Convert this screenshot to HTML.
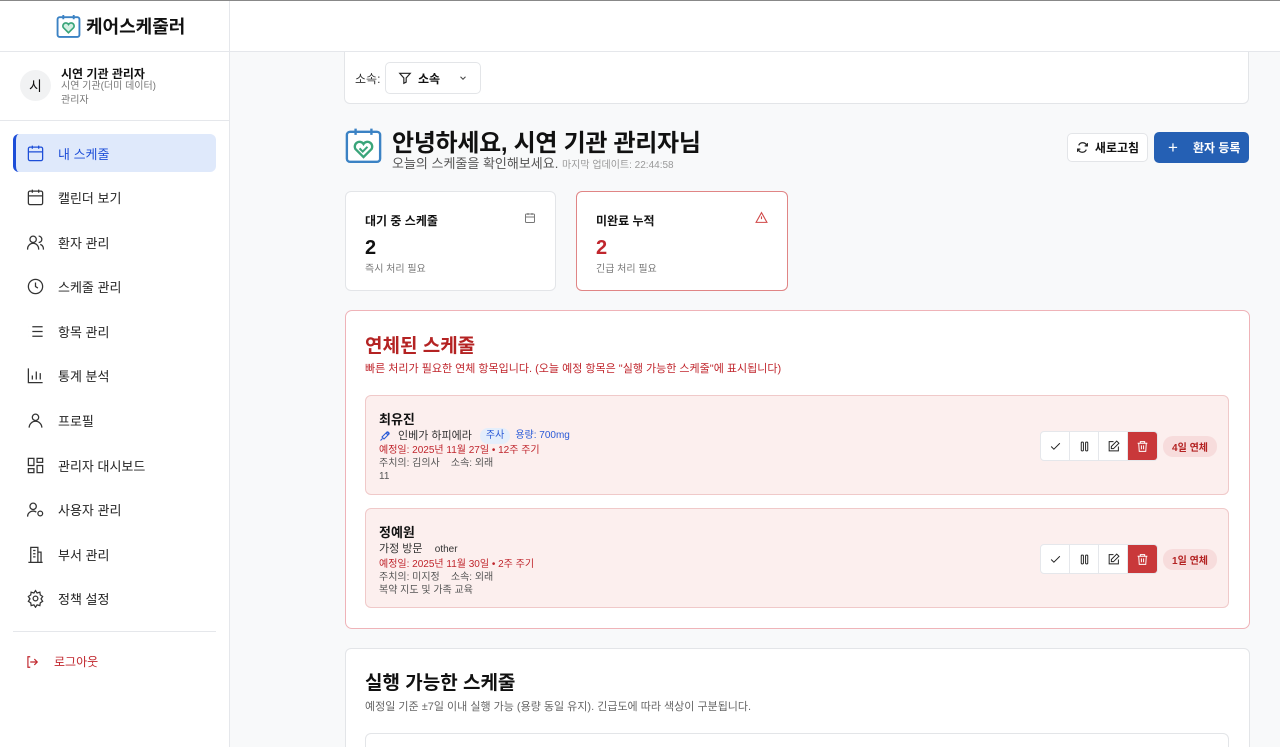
<!DOCTYPE html>
<html style="height:747px;overflow:hidden"><head><meta charset="utf-8"><style>
*{box-sizing:border-box;margin:0;padding:0}
body{width:1280px;height:747px;overflow:hidden;background:#f8f9fa;font-family:"Liberation Sans","Noto Sans CJK KR",sans-serif;color:#111;position:relative}
.abs{position:absolute}
.side{left:0;top:0;width:230px;height:747px;background:#fff;border-right:1px solid #e5e7eb}
.top{left:230px;top:0;width:1050px;height:52px;background:#fff;border-bottom:1px solid #e5e7eb}
.nav{position:absolute;left:13px;width:203px;height:38px;display:flex;align-items:center;padding-left:13px;font-size:13px;color:#222;border-radius:6px}
.nav svg{width:19px;height:19px;margin-right:13px;stroke:#333;fill:none;stroke-width:1.6}
.nav.act{background:#dfe9fb;color:#1d4ed8;border-left:3px solid #1d4ed8;padding-left:10px}
.nav.act svg{stroke:#1d4ed8}
.card{background:#fff;border:1px solid #e3e5e8;border-radius:6px}
.item{left:365px;width:864px;background:#fcefee;border:1px solid #f0c9c9;border-radius:6px;padding:15px 13px}
.item .s{font-size:10px;line-height:13px}
.btns{position:absolute;right:71px;display:flex;border:1px solid #e5e7eb;border-radius:4px;overflow:hidden;background:#fff}
.btns div{width:29px;height:28px;display:flex;align-items:center;justify-content:center;border-right:1px solid #e5e7eb}
.btns svg{width:13px;height:13px;fill:none;stroke:#222;stroke-width:1.8}
.badge{position:absolute;right:12px;background:#f7dcdc;color:#b42323;font-size:10px;padding:3px 9px;border-radius:10px;font-weight:bold}
</style></head><body>
<div class="abs side">
 <div style="position:absolute;left:56px;top:13px;display:flex;align-items:center">
  <svg width="25" height="25" viewBox="0 0 24 24"><rect x="1.5" y="3" width="21" height="19" rx="2" fill="#fff" stroke="#3b82c4" stroke-width="1.8"/><path d="M7 1v4M17 1v4" stroke="#3b82c4" stroke-width="1.8"/><path d="M12 18l-5-5a2.5 2.5 0 0 1 5-3a2.5 2.5 0 0 1 5 3z" fill="#d5f0e3" stroke="#3aa57a" stroke-width="1.6"/></svg>
  <span style="font-size:18px;font-weight:bold;margin-left:5px">케어스케줄러</span></div>
 <div style="position:absolute;left:0;top:51px;width:229px;border-top:1px solid #e5e7eb"></div>
 <div style="position:absolute;left:20px;top:70px;width:31px;height:31px;border-radius:50%;background:#f1f2f3;font-size:14px;display:flex;align-items:center;justify-content:center">시</div>
 <div style="position:absolute;left:61px;top:65px;font-size:12px;font-weight:bold">시연 기관 관리자</div>
 <div style="position:absolute;left:61px;top:80px;font-size:10px;color:#777;line-height:14px">시연 기관(더미 데이터)<br>관리자</div>
 <div style="position:absolute;left:0;top:120px;width:229px;border-top:1px solid #e5e7eb"></div>
 <div class="nav act" style="top:134px"><svg viewBox="0 0 24 24"><rect x="3" y="4" width="18" height="17" rx="2"/><path d="M8 2v4M16 2v4M3 10h18"/></svg>내 스케줄</div>
 <div class="nav" style="top:178px"><svg viewBox="0 0 24 24"><rect x="3" y="4" width="18" height="17" rx="2"/><path d="M8 2v4M16 2v4M3 10h18M8 14h.01M12 14h.01M16 14h.01M8 18h.01M12 18h.01M16 18h.01"/></svg>캘린더 보기</div>
 <div class="nav" style="top:223px"><svg viewBox="0 0 24 24"><circle cx="9" cy="8" r="4"/><path d="M2 21v-1a7 7 0 0 1 14 0v1M16 4a4 4 0 0 1 0 8M22 21v-1a6 6 0 0 0-4-5.6"/></svg>환자 관리</div>
 <div class="nav" style="top:267px"><svg viewBox="0 0 24 24"><circle cx="12" cy="12" r="9"/><path d="M12 7v5l3 2"/></svg>스케줄 관리</div>
 <div class="nav" style="top:312px"><svg viewBox="0 0 24 24"><path d="M8 6h13M8 12h13M8 18h13M3 6h.01M3 12h.01M3 18h.01"/></svg>항목 관리</div>
 <div class="nav" style="top:356px"><svg viewBox="0 0 24 24"><path d="M3 3v18h18M8 17v-5M13 17V7M18 17v-8"/></svg>통계 분석</div>
 <div class="nav" style="top:401px"><svg viewBox="0 0 24 24"><circle cx="12" cy="8" r="4"/><path d="M4 21a8 8 0 0 1 16 0"/></svg>프로필</div>
 <div class="nav" style="top:446px"><svg viewBox="0 0 24 24"><rect x="3" y="3" width="7" height="9"/><rect x="14" y="3" width="7" height="5"/><rect x="14" y="12" width="7" height="9"/><rect x="3" y="16" width="7" height="5"/></svg>관리자 대시보드</div>
 <div class="nav" style="top:490px"><svg viewBox="0 0 24 24"><circle cx="9" cy="8" r="4"/><path d="M2 21a7 7 0 0 1 11-5.7"/><circle cx="18" cy="17" r="3"/></svg>사용자 관리</div>
 <div class="nav" style="top:535px"><svg viewBox="0 0 24 24"><path d="M6 22V3h9v19M15 9h4v13M3 22h18M9 7h3M9 11h3M9 15h3"/></svg>부서 관리</div>
 <div class="nav" style="top:579px"><svg viewBox="0 0 24 24"><circle cx="12" cy="12" r="3"/><path d="M12 2l2 3 3.5-1 .5 3.5 3 2-2 3 2 3-3 2-.5 3.5-3.5-1-2 3-2-3-3.5 1-.5-3.5-3-2 2-3-2-3 3-2 .5-3.5 3.5 1z"/></svg>정책 설정</div>
 <div style="position:absolute;left:13px;top:631px;width:203px;border-top:1px solid #e5e7eb"></div>
 <div style="position:absolute;left:25px;top:653px;font-size:12px;color:#c0262d;display:flex;align-items:center"><svg width="14" height="14" viewBox="0 0 24 24" fill="none" stroke="#c0262d" stroke-width="2" style="margin-right:15px"><path d="M9 21H5V3h4M16 17l5-5-5-5M21 12H9"/></svg>로그아웃</div>
</div>
<div class="abs top"></div>
<div class="abs" style="left:0;top:0;width:1280px;height:1px;background:#888"></div>

<div class="abs card" style="left:344px;top:52px;width:905px;height:52px;border-top:none;border-radius:0 0 6px 6px"></div>
<div class="abs" style="left:355px;top:70px;font-size:12px;color:#333">소속:</div>
<div class="abs" style="left:385px;top:62px;width:96px;height:32px;border:1px solid #e3e5e8;border-radius:5px;background:#fff;display:flex;align-items:center;padding-left:12px;font-size:12px;font-weight:bold">
 <svg width="14" height="14" viewBox="0 0 24 24" fill="none" stroke="#222" stroke-width="2" style="margin-right:6px"><path d="M3 4h18l-7 8v7l-4 2v-9z"/></svg>소속
 <svg width="10" height="10" viewBox="0 0 24 24" fill="none" stroke="#444" stroke-width="2.5" style="margin-left:18px"><path d="M6 9l6 6 6-6"/></svg></div>

<svg class="abs" style="left:344px;top:127px" width="39" height="38" viewBox="0 0 24 24"><rect x="1.5" y="3" width="21" height="19" rx="2" fill="#fff" stroke="#3b82c4" stroke-width="1.5"/><path d="M7 1v4M17 1v4" stroke="#3b82c4" stroke-width="1.5"/><path d="M12 19l-5-5a2.7 2.7 0 0 1 5-3.3a2.7 2.7 0 0 1 5 3.3z" fill="none" stroke="#3aa57a" stroke-width="1.5"/><path d="M9.5 13.5l2 2 3-3" fill="none" stroke="#3aa57a" stroke-width="1.3"/></svg>
<div class="abs" style="left:392px;top:123px;font-size:24px;font-weight:bold;letter-spacing:-0.3px">안녕하세요, 시연 기관 관리자님</div>
<div class="abs" style="left:392px;top:153px;font-size:13px;color:#555">오늘의 스케줄을 확인해보세요. <span style="font-size:10px;color:#999">마지막 업데이트: 22:44:58</span></div>
<div class="abs" style="left:1067px;top:133px;width:81px;height:29px;background:#fff;border:1px solid #e3e5e8;border-radius:5px;font-size:12px;font-weight:bold;display:flex;align-items:center;justify-content:center"><svg width="13" height="13" viewBox="0 0 24 24" fill="none" stroke="#222" stroke-width="2.2" style="margin-right:6px"><path d="M21 4v5h-5M3 20v-5h5M20 9a8 8 0 0 0-15-1M4 15a8 8 0 0 0 15 1"/></svg>새로고침</div>
<div class="abs" style="left:1154px;top:132px;width:95px;height:31px;background:#2560b4;border-radius:5px;color:#fff;font-size:12px;font-weight:bold;display:flex;align-items:center;padding-left:14px"><span style="font-size:17px;font-weight:normal;margin-right:15px">+</span>환자 등록</div>

<div class="abs card" style="left:345px;top:191px;width:211px;height:100px;padding:20px 19px">
 <div style="font-size:12px;font-weight:bold">대기 중 스케줄</div>
 <svg style="position:absolute;right:19px;top:20px" width="12" height="12" viewBox="0 0 24 24" fill="none" stroke="#777" stroke-width="2"><rect x="3" y="4" width="18" height="17" rx="2"/><path d="M8 2v4M16 2v4M3 10h18"/></svg>
 <div style="font-size:20px;font-weight:bold;margin-top:8px">2</div>
 <div style="font-size:10px;color:#777">즉시 처리 필요</div></div>
<div class="abs card" style="left:576px;top:191px;width:212px;height:100px;padding:20px 19px;border-color:#e08585">
 <div style="font-size:12px;font-weight:bold">미완료 누적</div>
 <svg style="position:absolute;right:19px;top:19px" width="13" height="13" viewBox="0 0 24 24" fill="none" stroke="#d04848" stroke-width="2"><path d="M12 3L2 21h20zM12 10v5M12 18h.01"/></svg>
 <div style="font-size:20px;font-weight:bold;margin-top:8px;color:#c0262d">2</div>
 <div style="font-size:10px;color:#777">긴급 처리 필요</div></div>

<div class="abs" style="left:345px;top:310px;width:905px;height:319px;background:#fff;border:1px solid #efb3b8;border-radius:7px"></div>
<div class="abs" style="left:365px;top:331px;font-size:19px;font-weight:bold;color:#b42323">연체된 스케줄</div>
<div class="abs" style="left:365px;top:360px;font-size:11px;color:#c0262d">빠른 처리가 필요한 연체 항목입니다. (오늘 예정 항목은 "실행 가능한 스케줄"에 표시됩니다)</div>

<div class="abs item" style="top:395px;height:100px">
 <div style="font-size:13px;font-weight:bold;line-height:17px">최유진</div>
 <div style="font-size:11px;color:#333;display:flex;align-items:center;line-height:16px"><svg width="12" height="12" viewBox="0 0 24 24" fill="none" stroke="#2b5bd7" stroke-width="2.2" style="margin-right:7px"><path d="M3 21l4-4M6 14l4 4 10-10-4-4zM14 6l4 4M17 3l4 4"/></svg>인베가 하피에라<span style="background:#e4eefb;color:#2b5bd7;font-size:10px;padding:0 6px;border-radius:8px;margin-left:8px">주사</span><span style="color:#2b5bd7;font-size:10px;margin-left:5px">용량: 700mg</span></div>
 <div class="s" style="color:#c0262d">예정일: 2025년 11월 27일 • 12주 주기</div>
 <div class="s" style="color:#555">주치의: 김의사 &nbsp;&nbsp; 소속: 외래</div>
 <div class="s" style="color:#555">11</div>
</div>
<div class="abs item" style="top:508px;height:100px">
 <div style="font-size:13px;font-weight:bold;line-height:17px">정예원</div>
 <div style="font-size:11px;color:#333;line-height:16px">가정 방문 &nbsp;&nbsp; <span style="font-size:10px">other</span></div>
 <div class="s" style="color:#c0262d">예정일: 2025년 11월 30일 • 2주 주기</div>
 <div class="s" style="color:#555">주치의: 미지정 &nbsp;&nbsp; 소속: 외래</div>
 <div class="s" style="color:#555">복약 지도 및 가족 교육</div>
</div>
<div class="abs" style="left:365px;top:431px;width:864px">
 <div class="btns" style="top:0"><div><svg viewBox="0 0 24 24"><path d="M4 12l5 5L20 6"/></svg></div><div><svg viewBox="0 0 24 24"><rect x="6" y="4" width="4" height="16" rx="1"/><rect x="14" y="4" width="4" height="16" rx="1"/></svg></div><div><svg viewBox="0 0 24 24"><path d="M12 3H4v17h17v-8M18 2l4 4-10 10H8v-4z"/></svg></div><div style="background:#c9383a;border:none"><svg viewBox="0 0 24 24" style="stroke:#fff"><path d="M3 6h18M8 6V3h8v3M5 6l1 15h12l1-15M10 10v7M14 10v7"/></svg></div></div>
 <div class="badge" style="top:5px">4일 연체</div>
</div>
<div class="abs" style="left:365px;top:544px;width:864px">
 <div class="btns" style="top:0"><div><svg viewBox="0 0 24 24"><path d="M4 12l5 5L20 6"/></svg></div><div><svg viewBox="0 0 24 24"><rect x="6" y="4" width="4" height="16" rx="1"/><rect x="14" y="4" width="4" height="16" rx="1"/></svg></div><div><svg viewBox="0 0 24 24"><path d="M12 3H4v17h17v-8M18 2l4 4-10 10H8v-4z"/></svg></div><div style="background:#c9383a;border:none"><svg viewBox="0 0 24 24" style="stroke:#fff"><path d="M3 6h18M8 6V3h8v3M5 6l1 15h12l1-15M10 10v7M14 10v7"/></svg></div></div>
 <div class="badge" style="top:5px">1일 연체</div>
</div>

<div class="abs card" style="left:345px;top:648px;width:905px;height:120px"></div>
<div class="abs" style="left:365px;top:668px;font-size:19px;font-weight:bold">실행 가능한 스케줄</div>
<div class="abs" style="left:365px;top:698px;font-size:11px;color:#666">예정일 기준 ±7일 이내 실행 가능 (용량 동일 유지). 긴급도에 따라 색상이 구분됩니다.</div>
<div class="abs" style="left:365px;top:733px;width:864px;height:30px;border:1px solid #e3e5e8;border-radius:6px"></div>
</body></html>
